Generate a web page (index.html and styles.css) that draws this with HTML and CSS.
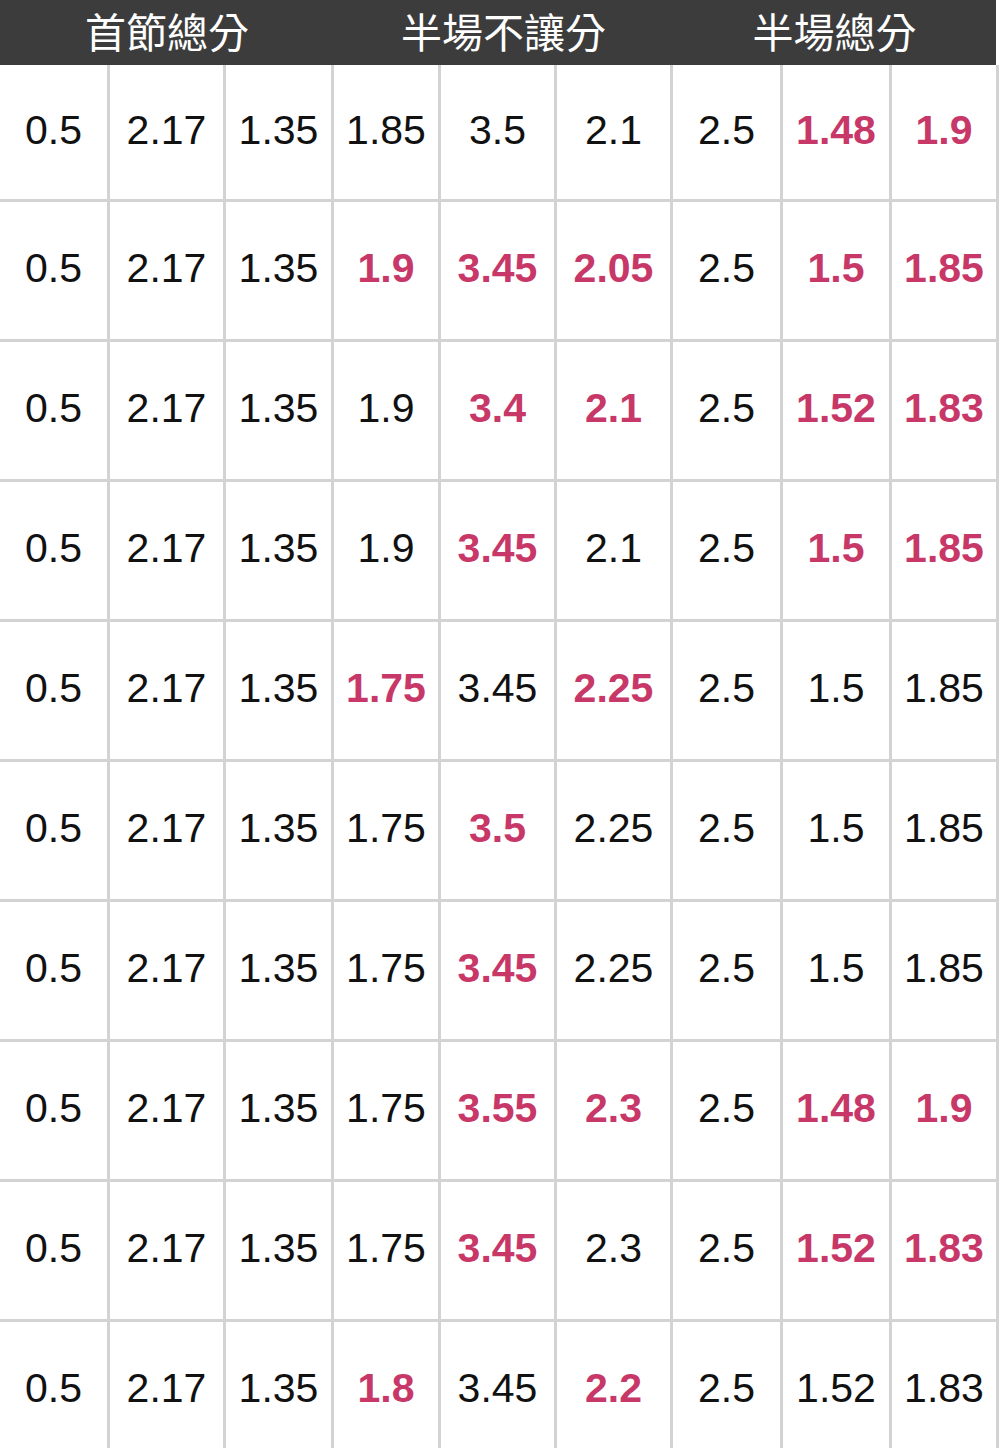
FILE: index.html
```html
<!DOCTYPE html>
<html lang="zh-Hant">
<head>
<meta charset="utf-8">
<title>賠率表</title>
<link rel="stylesheet" href="styles.css">
</head>
<body>
<div class="sheet">
  <div class="head">
    <div class="group g1">首節總分</div>
    <div class="group g2">半場不讓分</div>
    <div class="group g3">半場總分</div>
  </div>
  <div class="row first">
    <div class="c">0.5</div><div class="c">2.17</div><div class="c">1.35</div><div class="c">1.85</div><div class="c">3.5</div><div class="c">2.1</div><div class="c">2.5</div><div class="c hi">1.48</div><div class="c hi">1.9</div>
  </div>
  <div class="row">
    <div class="c">0.5</div><div class="c">2.17</div><div class="c">1.35</div><div class="c hi">1.9</div><div class="c hi">3.45</div><div class="c hi">2.05</div><div class="c">2.5</div><div class="c hi">1.5</div><div class="c hi">1.85</div>
  </div>
  <div class="row">
    <div class="c">0.5</div><div class="c">2.17</div><div class="c">1.35</div><div class="c">1.9</div><div class="c hi">3.4</div><div class="c hi">2.1</div><div class="c">2.5</div><div class="c hi">1.52</div><div class="c hi">1.83</div>
  </div>
  <div class="row">
    <div class="c">0.5</div><div class="c">2.17</div><div class="c">1.35</div><div class="c">1.9</div><div class="c hi">3.45</div><div class="c">2.1</div><div class="c">2.5</div><div class="c hi">1.5</div><div class="c hi">1.85</div>
  </div>
  <div class="row">
    <div class="c">0.5</div><div class="c">2.17</div><div class="c">1.35</div><div class="c hi">1.75</div><div class="c">3.45</div><div class="c hi">2.25</div><div class="c">2.5</div><div class="c">1.5</div><div class="c">1.85</div>
  </div>
  <div class="row">
    <div class="c">0.5</div><div class="c">2.17</div><div class="c">1.35</div><div class="c">1.75</div><div class="c hi">3.5</div><div class="c">2.25</div><div class="c">2.5</div><div class="c">1.5</div><div class="c">1.85</div>
  </div>
  <div class="row">
    <div class="c">0.5</div><div class="c">2.17</div><div class="c">1.35</div><div class="c">1.75</div><div class="c hi">3.45</div><div class="c">2.25</div><div class="c">2.5</div><div class="c">1.5</div><div class="c">1.85</div>
  </div>
  <div class="row">
    <div class="c">0.5</div><div class="c">2.17</div><div class="c">1.35</div><div class="c">1.75</div><div class="c hi">3.55</div><div class="c hi">2.3</div><div class="c">2.5</div><div class="c hi">1.48</div><div class="c hi">1.9</div>
  </div>
  <div class="row">
    <div class="c">0.5</div><div class="c">2.17</div><div class="c">1.35</div><div class="c">1.75</div><div class="c hi">3.45</div><div class="c">2.3</div><div class="c">2.5</div><div class="c hi">1.52</div><div class="c hi">1.83</div>
  </div>
  <div class="row">
    <div class="c">0.5</div><div class="c">2.17</div><div class="c">1.35</div><div class="c hi">1.8</div><div class="c">3.45</div><div class="c hi">2.2</div><div class="c">2.5</div><div class="c">1.52</div><div class="c">1.83</div>
  </div>
</div>
</body>
</html>
```

FILE: styles.css
```css
html, body {
  margin: 0;
  padding: 0;
  background: #ffffff;
}

.sheet {
  width: 999px;
  font-family: "Liberation Sans", Arial, sans-serif;
}

.head {
  display: grid;
  grid-template-columns: 334px 339px 323px;
  width: 996px;
  height: 65px;
  background: #3c3c3c;
  color: #ffffff;
}

.group {
  font-family: "Noto Sans CJK TC", "Noto Sans CJK SC", sans-serif;
  font-size: 41px;
  line-height: normal;
  text-align: center;
  letter-spacing: 0;
}

.row {
  display: grid;
  grid-template-columns: 110px 116px 108px 107px 116px 116px 110px 109px 107px;
  height: 140px;
}

.row.first {
  height: 137px;
}

.c {
  display: flex;
  align-items: center;
  justify-content: center;
  padding-bottom: 4px;
  border-right: 3px solid #d3d3d3;
  border-bottom: 3px solid #d3d3d3;
  font-size: 41px;
  color: #111111;
  white-space: nowrap;
}

.c.hi {
  color: #c73868;
  font-weight: bold;
}
```
